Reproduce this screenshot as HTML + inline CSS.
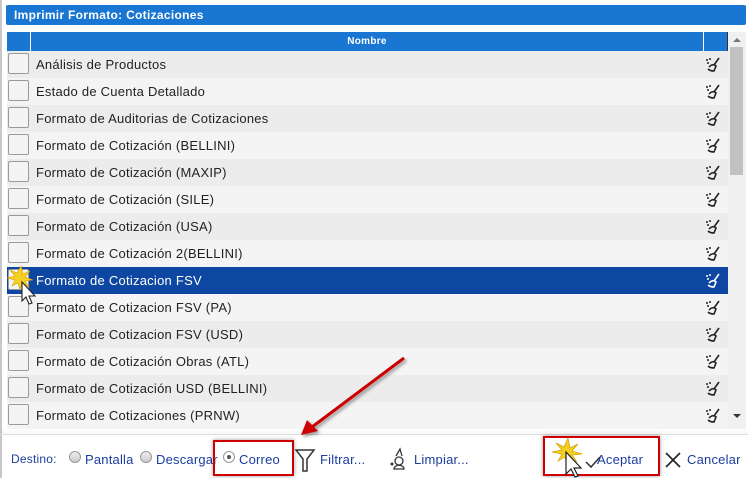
<!DOCTYPE html>
<html><head><meta charset="utf-8"><style>
*{margin:0;padding:0;box-sizing:border-box}
body{width:748px;height:478px;background:#fff;font-family:"Liberation Sans","DejaVu Sans",sans-serif;position:relative;overflow:hidden}
.lb{position:absolute;left:0;top:0;width:2px;height:478px;background:#c8c8c8}
.title{position:absolute;left:6px;top:5px;width:740px;height:20px;background:#1976d2;color:#fff;font-weight:bold;font-size:12px;line-height:20px;padding-left:8px;border-radius:2px;letter-spacing:.3px}
.hdr{position:absolute;left:7px;top:32px;width:721px;height:19px;background:#1976d2;color:#fff;font-weight:bold;font-size:10px;line-height:19px}
.hdr .c1{position:absolute;left:23px;top:0;width:1px;height:19px;background:#fff}
.hdr .c2{position:absolute;left:696px;top:0;width:1px;height:19px;background:#fff}
.hdr .c3{position:absolute;left:720px;top:0;width:1px;height:19px;background:#333}
.hdr span{position:absolute;left:24px;width:672px;text-align:center;letter-spacing:.3px}
.row{position:absolute;left:7px;width:721px;height:27px;font-size:13px;line-height:27px;color:#222;letter-spacing:.25px}
.row .cb{position:absolute;left:1px;top:2px;width:21px;height:21px;border:1px solid #9a9a9a;border-radius:2px;background:#f4f4f4}
.row .t{position:absolute;left:29px;top:0}
.row svg{position:absolute;left:698px;top:6px}
.sel{background:#0d47a1!important;color:#fff}
.sb{position:absolute;left:728px;top:32px;width:18px;height:397px;background:#f0f0f0}
.sb .th{position:absolute;left:2px;top:15px;width:13px;height:128px;background:#c1c1c1}
.foot{position:absolute;left:0;top:434px;width:748px;height:1px;background:#ddd;box-shadow:0 -2px 3px rgba(0,0,0,.12)}
.f{position:absolute;top:452px;font-size:13px;color:#1a3d9e;letter-spacing:.2px}
.rad{position:absolute;top:451px;width:12px;height:12px;border-radius:50%;border:1px solid #999;background:linear-gradient(#eee,#ccc)}
.box{position:absolute;border:2px solid #c00;box-shadow:0 0 4px rgba(0,0,0,.4)}
</style></head><body>
<div class="lb"></div>
<div class="title">Imprimir Formato: Cotizaciones</div>
<div class="hdr"><div class="c1"></div><span>Nombre</span><div class="c2"></div><div class="c3"></div></div>
<div id="rows"></div>
<div class="sb"><div style="position:absolute;left:5px;top:6px;border:4px solid transparent;border-bottom:4px solid #777;border-top:0"></div><div class="th"></div><div style="position:absolute;left:5px;top:382px;border:4px solid transparent;border-top:4px solid #333;border-bottom:0"></div></div>
<div class="foot"></div>
<div class="f" style="left:11px;font-size:12px">Destino:</div>
<div class="rad" style="left:69px"></div><div class="f" style="left:85px">Pantalla</div>
<div class="rad" style="left:140px"></div><div class="f" style="left:156px">Descargar</div>
<div class="rad" style="left:223px;background:#fff"><div style="position:absolute;left:3px;top:3px;width:4px;height:4px;border-radius:50%;background:#555"></div></div><div class="f" style="left:239px">Correo</div>
<div class="box" style="left:213px;top:440px;width:81px;height:36px"></div>
<svg style="position:absolute;left:294px;top:447px" width="22" height="26" viewBox="0 0 22 26"><path d="M2 3H20L13 12V24H9V12Z" fill="none" stroke="#333" stroke-width="1.5"/></svg>
<div class="f" style="left:320px">Filtrar...</div>
<svg style="position:absolute;left:388px;top:446px" width="22" height="26" viewBox="0 0 22 26"><circle cx="11" cy="15" r="4" fill="none" stroke="#333" stroke-width="1.3"/><path d="M6 23h10a4 3 0 0 0-10 0z M8 10l4-7 2 7" fill="none" stroke="#333" stroke-width="1.3"/><circle cx="4" cy="18" r="1.5" fill="#333"/></svg>
<div class="f" style="left:414px">Limpiar...</div>
<div class="box" style="left:543px;top:436px;width:117px;height:40px"></div>
<svg style="position:absolute;left:552px;top:436px" width="60" height="42" viewBox="0 0 60 42"><path d="M16 2l2 10 8-4-6 7 10 3-10 1 5 7-8-5-2 8-2-8-7 4 4-7-10-2 10-2-6-7 8 4z" fill="#f5d020" stroke="#d4a000" stroke-width=".7"/><path d="M14 16v22l5-5 4 8 3-1-4-8h7z" fill="#fff" stroke="#222" stroke-width="1.2"/><path d="M34 26l5 5 9-10" fill="none" stroke="#333" stroke-width="1.5"/></svg>
<div class="f" style="left:597px">Aceptar</div>
<svg style="position:absolute;left:663px;top:450px" width="20" height="20"><path d="M3 3L17 17M17 3L3 17" stroke="#222" stroke-width="1.6"/></svg>
<div class="f" style="left:687px">Cancelar</div>
<svg style="position:absolute;left:0;top:0;pointer-events:none" width="748" height="478"><defs><filter id="s"><feDropShadow dx="2" dy="2" stdDeviation="1.5" flood-opacity=".4"/></filter></defs><g filter="url(#s)"><line x1="404" y1="358" x2="312" y2="427" stroke="#c00" stroke-width="3"/><path d="M301 435L307 420L318 431Z" fill="#c00"/></g>
<g><path d="M21 266l2 8 7-3-5 6 8 3-8 1 4 6-7-4-2 7-2-7-6 3 3-6-8-2 8-2-5-6 7 3z" fill="#f5d020" stroke="#d4a000" stroke-width=".6"/><path d="M22 282v19l4-4 3 7 3-1-3-7h6z" fill="#fff" stroke="#222" stroke-width="1.1"/></g></svg>
<script>
var n=["Análisis de Productos","Estado de Cuenta Detallado","Formato de Auditorias de Cotizaciones","Formato de Cotización (BELLINI)","Formato de Cotización (MAXIP)","Formato de Cotización (SILE)","Formato de Cotización (USA)","Formato de Cotización 2(BELLINI)","Formato de Cotizacion FSV","Formato de Cotizacion FSV (PA)","Formato de Cotizacion FSV (USD)","Formato de Cotización Obras (ATL)","Formato de Cotización USD (BELLINI)","Formato de Cotizaciones (PRNW)"];
var h="";n.forEach(function(t,i){var s=i==8,c=s?"#fff":"#222";h+='<div class="row'+(s?' sel':'')+'" style="top:'+(51+i*27)+'px;background:'+(i%2?'#f4f4f4':'#ececec')+'"><div class="cb"></div><div class="t">'+t+'</div><svg width="16" height="16" viewBox="0 0 16 16"><circle cx="2" cy="3" r="1" fill="'+c+'"/><circle cx="5" cy="2" r="1" fill="'+c+'"/><circle cx="3" cy="6" r="1" fill="'+c+'"/><path d="M14 1L9 8M4 10q4-4 7-1l-2 5q-4 0-6-2" fill="none" stroke="'+c+'" stroke-width="1.6"/></svg></div>'});
document.getElementById("rows").innerHTML=h;
</script>
</body></html>
